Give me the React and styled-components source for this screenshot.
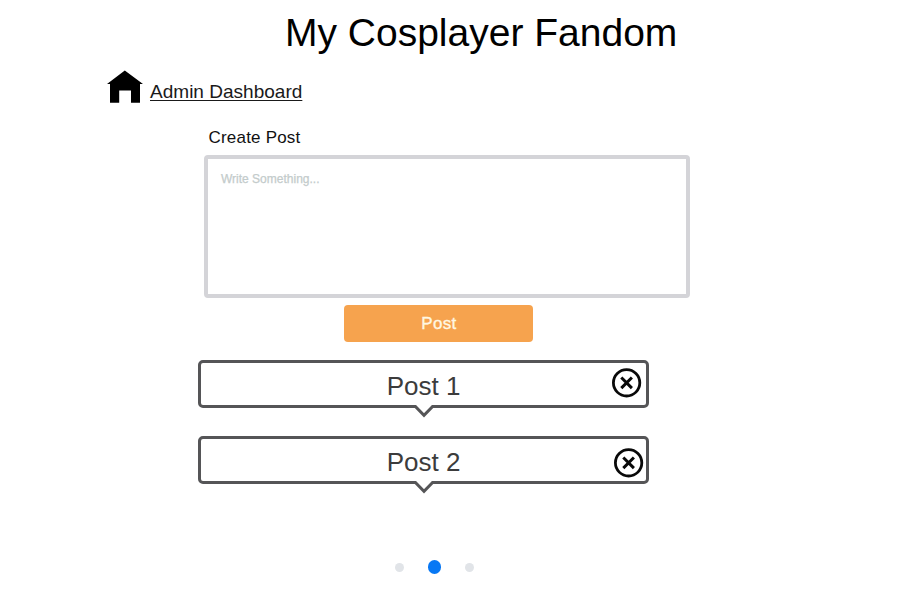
import React from 'react';
import styled, { createGlobalStyle } from 'styled-components';

const GlobalStyle = createGlobalStyle`
  *, *::before, *::after { box-sizing: border-box; }
  body {
    margin: 0;
    background: #fff;
    color: #111;
    font-family: "Liberation Sans", Arial, sans-serif;
  }
`;

const Page = styled.main`
  display: flex;
  flex-direction: column;
  align-items: flex-start;
  width: 910px;
  height: 605px;
  overflow: hidden;
`;

const Title = styled.h1`
  margin: 10px 0 0 285px;
  font-size: 39px;
  line-height: 46px;
  font-weight: 400;
  color: #000;
  white-space: nowrap;
`;

const HomeNav = styled.nav`
  display: flex;
  align-items: flex-start;
  gap: 7px;
  height: 34px;
  margin: 14px 0 0 107px;
`;

const HomeLink = styled.a`
  margin-top: 11px;
  font-size: 19.05px;
  line-height: 22px;
  color: #1a1a1a;
  text-decoration: underline;
  text-decoration-thickness: 1.4px;
  text-underline-offset: 2px;
  white-space: nowrap;
`;

const Composer = styled.form`
  display: flex;
  flex-direction: column;
  width: 486px;
  margin: 24px 0 0 204px;
`;

const Label = styled.label`
  height: 20px;
  margin: 0 0 7px 4.5px;
  font-size: 17px;
  line-height: 20px;
  letter-spacing: 0.2px;
`;

const PostInput = styled.textarea`
  display: block;
  width: 486px;
  height: 143px;
  padding: 12px 13px;
  border: 4px solid #d4d4d8;
  border-radius: 4px;
  background: #fff;
  font: 12px/16px "Liberation Sans", Arial, sans-serif;
  resize: none;
  outline: none;
  &::placeholder {
    color: #c3cbcb;
    opacity: 1;
    -webkit-text-stroke: 0.25px #c3cbcb;
  }
`;

const SubmitButton = styled.button`
  width: 189px;
  height: 37px;
  margin: 7px 0 0 140.4px;
  padding: 0;
  border: 0;
  border-radius: 4px;
  background: #f6a34e;
  color: #fff7e2;
  font: 17px/20px "Liberation Sans", Arial, sans-serif;
  letter-spacing: 0.3px;
  -webkit-text-stroke: 0.35px #fff7e2;
`;

const PostList = styled.section`
  display: flex;
  flex-direction: column;
  gap: 28px;
  margin: 18px 0 0 198px;
`;

const PostCard = styled.article`
  position: relative;
  display: grid;
  grid-template-columns: 1fr auto;
  width: 451px;
  height: 48px;
  border: 3px solid #555557;
  border-radius: 5px;
`;

const PostTitle = styled.h2`
  grid-area: 1 / 1 / 2 / 3;
  justify-self: center;
  margin: 8px 0 0;
  font-size: 26px;
  line-height: 30px;
  font-weight: 400;
  color: #3c3c3c;
`;

const DeleteButton = styled.button`
  grid-area: 1 / 2;
  align-self: start;
  display: flex;
  margin: ${({ $top }) => $top}px ${({ $right }) => $right}px 0 0;
  padding: 0;
  border: 0;
  background: none;
  color: #090909;
`;

const Tail = styled.svg`
  position: absolute;
  left: 211px;
  top: 41px;
`;

const Pager = styled.div`
  display: flex;
  align-items: center;
  gap: 24px;
  height: 14px;
  margin: 76px 0 0 394.5px;
`;

const Dot = styled.span`
  width: ${({ $active }) => ($active ? 13.5 : 9)}px;
  height: ${({ $active }) => ($active ? 13.5 : 9)}px;
  border-radius: 50%;
  background: ${({ $active }) => ($active ? '#0878f4' : '#e1e4e8')};
`;

const posts = [
  { title: 'Post 1', top: 5, right: 4 },
  { title: 'Post 2', top: 9, right: 2 },
];

function HomeIcon() {
  return (
    <svg width="36" height="34" viewBox="0 0 36 34" aria-hidden="true">
      <path d="M17.8 .5 36 14H33V32.8H24V20.5H12.2V32.8H3V14H0Z" fill="#000" />
    </svg>
  );
}

function CloseIcon() {
  return (
    <svg width="30" height="30" viewBox="0 0 30 30" fill="none" stroke="currentColor" aria-hidden="true">
      <circle cx="14.6" cy="14.8" r="13.2" strokeWidth="2.8" />
      <path d="M9.3 9.5 19.9 20.1M19.9 9.5 9.3 20.1" strokeWidth="3" />
    </svg>
  );
}

export default function App() {
  return (
    <>
      <GlobalStyle />
      <Page>
        <Title>My Cosplayer Fandom</Title>
        <HomeNav>
          <HomeIcon />
          <HomeLink>Admin Dashboard</HomeLink>
        </HomeNav>
        <Composer>
          <Label htmlFor="post">Create Post</Label>
          <PostInput id="post" placeholder="Write Something..." />
          <SubmitButton type="button">Post</SubmitButton>
        </Composer>
        <PostList>
          {posts.map(({ title, top, right }) => (
            <PostCard key={title}>
              <PostTitle>{title}</PostTitle>
              <DeleteButton type="button" aria-label="Delete post" $top={top} $right={right}>
                <CloseIcon />
              </DeleteButton>
              <Tail width="24" height="14" viewBox="0 0 24 14" aria-hidden="true">
                <path d="M3 0H21V2L12 11.2 3 2Z" fill="#fff" />
                <path d="M1 2.5H3.4L12 11.3 20.6 2.5H23" fill="none" stroke="#555557" strokeWidth="3" />
              </Tail>
            </PostCard>
          ))}
        </PostList>
        <Pager>
          <Dot />
          <Dot $active />
          <Dot />
        </Pager>
      </Page>
    </>
  );
}
